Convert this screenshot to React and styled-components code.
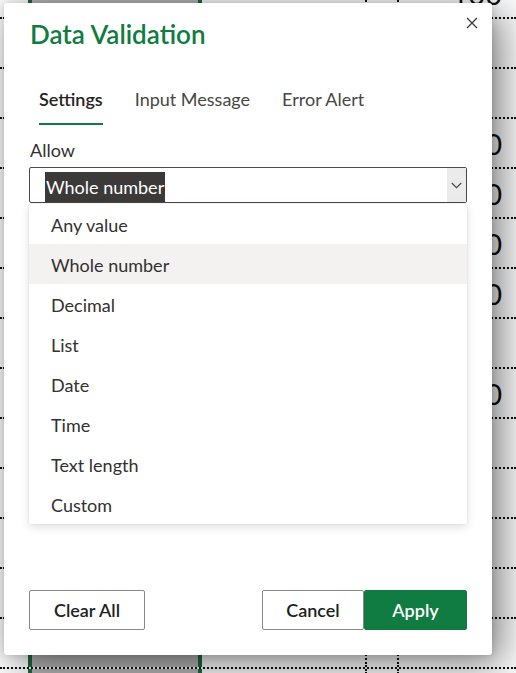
import React from "react";
import styled, { createGlobalStyle } from "styled-components";

const Global = createGlobalStyle`
  html, body { margin: 0; padding: 0; background: #fff; }
  body { font-family: Lato, "Open Sans", sans-serif; }
  * { box-sizing: border-box; }
`;

const GREEN = "#107c41";

const Page = styled.div`
  position: relative;
  width: 516px;
  height: 673px;
  overflow: hidden;
  background: #fff;
`;

/* ---------- spreadsheet behind the dialog ---------- */
const Sheet = styled.div`
  margin-top: -31px;
  display: flex;
  flex-direction: column;
`;

const Row = styled.div`
  display: grid;
  grid-template-columns: 28px 174px 165px 32px 1fr;
  height: 50px;
  border-bottom: 2px dotted #111;
`;

const Cell = styled.div`
  height: 100%;
  ${(p) => (p.$selected ? `background: #b8b8b8; border-left: 4px solid #1e6b40; border-right: 4px solid #1e6b40;` : "")}
  ${(p) => (p.$divider ? `border-right: 2px dotted #111;` : "")}
`;

const NumCell = styled.div`
  height: 100%;
  display: flex;
  align-items: center;
  justify-content: flex-end;
  padding-right: 14px;
  font-family: Lato, sans-serif;
  font-size: 29px;
  color: #111;
`;

/* ---------- dialog ---------- */
const Dialog = styled.div`
  position: absolute;
  left: 4px;
  top: 3px;
  width: 488px;
  height: 652px;
  background: #fff;
  border-radius: 3px;
  box-shadow: 10px 10px 40px rgba(0, 0, 0, 0.5), 0 0 10px rgba(0, 0, 0, 0.16);
  padding: 15px 25px 25px;
  display: flex;
  flex-direction: column;
`;

const Title = styled.h1`
  margin: 0 0 0 1px;
  font-size: 26px;
  line-height: 32px;
  font-weight: 600;
  color: ${GREEN};
`;

const CloseButton = styled.button`
  position: absolute;
  top: 13px;
  right: 14px;
  width: 13px;
  height: 13px;
  padding: 0;
  border: 0;
  background: none;
  display: flex;
  align-items: center;
  justify-content: center;
  color: #3b3a39;
`;

const Tabs = styled.div`
  display: flex;
  gap: 32px;
  margin-top: 37px;
  padding-left: 10px;
`;

const Tab = styled.div`
  font-size: 18px;
  line-height: 24px;
  padding-bottom: 12px;
  border-bottom: 2px solid ${(p) => (p.$active ? GREEN : "transparent")};
  color: ${(p) => (p.$active ? "#252423" : "#484644")};
  font-weight: ${(p) => (p.$active ? 600 : 400)};
`;

const Label = styled.div`
  margin-top: 13px;
  font-size: 18px;
  line-height: 24px;
  color: #323130;
  padding-left: 1px;
`;

const SelectWrap = styled.div`
  position: relative;
  margin-top: 5px;
`;

const SelectBox = styled.div`
  height: 36px;
  border: 1px solid #4a4948;
  border-radius: 2px;
  display: flex;
`;

const SelectValue = styled.div`
  flex: 1;
  padding: 4px 0 0 15px;
`;

const Highlight = styled.span`
  display: inline-block;
  height: 30px;
  line-height: 30px;
  padding: 0 1px;
  background: #3b3a39;
  color: #fff;
  font-size: 18px;
`;

const ChevronBox = styled.div`
  width: 19px;
  background: #ebebeb;
  display: flex;
  align-items: center;
  justify-content: center;
`;

const Menu = styled.ul`
  position: absolute;
  top: calc(100% + 1px);
  left: 0;
  right: 0;
  margin: 0;
  padding: 0;
  list-style: none;
  background: #fff;
  border-radius: 2px;
  box-shadow: 0 3px 10px rgba(0, 0, 0, 0.13), 0 0 2px rgba(0, 0, 0, 0.08);
  z-index: 2;
`;

const MenuItem = styled.li`
  height: 40px;
  line-height: 40px;
  padding: 1px 0 0 22px;
  font-size: 18px;
  color: #323130;
  background: ${(p) => (p.$hover ? "#f3f2f1" : "transparent")};
`;

const Footer = styled.div`
  margin-top: auto;
  display: flex;
  justify-content: space-between;
`;

const ButtonGroup = styled.div`
  display: flex;
`;

const Button = styled.button`
  width: ${(p) => p.$w}px;
  height: 40px;
  font-family: Lato, sans-serif;
  font-size: 18px;
  font-weight: 600;
  border-radius: 2px;
  border: 1px solid ${(p) => (p.$primary ? GREEN : "#8a8886")};
  background: ${(p) => (p.$primary ? GREEN : "#fff")};
  color: ${(p) => (p.$primary ? "#fff" : "#201f1e")};
  padding: 0;
`;

const rows = [
  { num: "100" },
  {},
  {},
  { num: "100" },
  { num: "100" },
  { num: "100" },
  { num: "100" },
  {},
  { num: "100" },
  {},
  {},
  {},
  {},
  {},
  {},
];

const options = [
  "Any value",
  "Whole number",
  "Decimal",
  "List",
  "Date",
  "Time",
  "Text length",
  "Custom",
];

export default function App() {
  return (
    <Page>
      <Global />
      <Sheet>
        {rows.map((r, i) => (
          <Row key={i}>
            <Cell />
            <Cell $selected />
            <Cell $divider />
            <Cell $divider />
            <NumCell>{r.num || ""}</NumCell>
          </Row>
        ))}
      </Sheet>

      <Dialog>
        <Title>Data Validation</Title>
        <CloseButton aria-label="Close">
          <svg width="12" height="12" viewBox="0 0 12 12">
            <path d="M1 1 L11 11 M11 1 L1 11" stroke="currentColor" strokeWidth="1.3" fill="none" />
          </svg>
        </CloseButton>

        <Tabs>
          <Tab $active>Settings</Tab>
          <Tab>Input Message</Tab>
          <Tab>Error Alert</Tab>
        </Tabs>

        <Label>Allow</Label>
        <SelectWrap>
          <SelectBox>
            <SelectValue>
              <Highlight>Whole number</Highlight>
            </SelectValue>
            <ChevronBox>
              <svg width="11" height="7" viewBox="0 0 11 7">
                <path d="M0.8 1 L5.5 5.7 L10.2 1" stroke="#444" strokeWidth="1.1" fill="none" />
              </svg>
            </ChevronBox>
          </SelectBox>
          <Menu>
            {options.map((o) => (
              <MenuItem key={o} $hover={o === "Whole number"}>
                {o}
              </MenuItem>
            ))}
          </Menu>
        </SelectWrap>

        <Footer>
          <Button $w={116}>Clear All</Button>
          <ButtonGroup>
            <Button $w={102}>Cancel</Button>
            <Button $w={103} $primary>
              Apply
            </Button>
          </ButtonGroup>
        </Footer>
      </Dialog>
    </Page>
  );
}
